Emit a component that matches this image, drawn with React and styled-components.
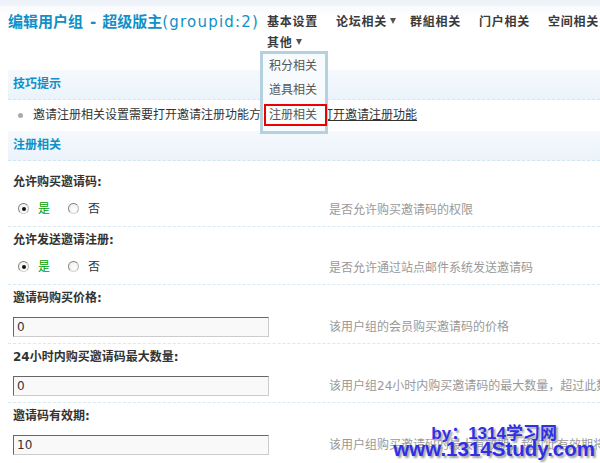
import React from 'react';
import styled, { createGlobalStyle } from 'styled-components';

const GlobalStyle = createGlobalStyle`
  html,
  body {
    margin: 0;
    padding: 0;
    overflow: hidden;
    background: #fff;
  }

  body {
    font: 12px/1.5 'DejaVu Sans', 'Noto Sans CJK SC', sans-serif;
    color: #333;
  }
`;

const Page = styled.div`
  position: relative;
  width: 600px;
  height: 463px;
  overflow: hidden;
  background: linear-gradient(#edf3f9 0, #edf3f9 5px, #f8fafd 6px, #fff 18px);
`;

const Header = styled.div`
  display: flex;
  align-items: flex-start;
  padding: 12px 0 0 8px;
`;

const Title = styled.h1`
  flex-shrink: 0;
  width: 259px;
  margin: 0;
  font-size: 15px;
  line-height: 21px;
  font-weight: bold;
  color: #0f90c8;
  white-space: nowrap;

  .dash {
    margin: 0 6px 0 7px;
  }

  .latin {
    font-weight: normal;
    letter-spacing: 1.2px;
  }
`;

const Nav = styled.ul`
  display: flex;
  flex-wrap: wrap;
  column-gap: 18px;
  flex-shrink: 0;
  width: 360px;
  margin: 0;
  padding: 0;
  list-style: none;
`;

const NavItem = styled.li`
  position: relative;
  font-weight: bold;
  line-height: 21px;
  letter-spacing: 0.75px;
  color: #3a3a3a;
  white-space: nowrap;
`;

const NavBreak = styled.li`
  flex-basis: 100%;
  height: 0;
`;

const Caret = styled.span`
  display: inline-block;
  width: 0;
  height: 0;
  margin: 0 -4px 0 3px;
  border-left: 3.5px solid transparent;
  border-right: 3.5px solid transparent;
  border-top: 6px solid #555;
  vertical-align: 2px;
`;

const Menu = styled.ul`
  position: absolute;
  top: 18px;
  left: -7px;
  z-index: 5;
  width: 62px;
  margin: 0;
  padding: 0 0 5px;
  list-style: none;
  border: 3px solid #b3d2de;
  background: #f8fbfd;
  font-weight: normal;
  letter-spacing: 0;
`;

const MenuItem = styled.li`
  padding-left: ${({ $active }) => ($active ? '3px' : '6px')};
  line-height: ${({ $active }) => ($active ? '18px' : '24px')};
  color: #555;
  ${({ $active }) =>
    $active &&
    `
    margin: 2px -2px 0 1px;
    border: 2px solid #e00;
    background: rgba(248, 251, 253, 0.85);
  `}
`;

const Main = styled.div`
  margin: 16px 0 0 8px;
`;

const SectionTitle = styled.h3`
  height: 29px;
  margin: 0;
  padding-left: 5px;
  font-size: 12px;
  line-height: 29px;
  font-weight: bold;
  color: #0f90c8;
  background: linear-gradient(#f5f9fd, #ebf3fb);
  border-bottom: 1px dashed #cfe5f4;
`;

const Tip = styled.div`
  position: relative;
  height: 31px;
  padding-left: 25px;
  line-height: 31px;
  white-space: nowrap;

  &:before {
    content: '';
    position: absolute;
    left: 10px;
    top: 13px;
    width: 5px;
    height: 5px;
    border-radius: 50%;
    background: #aaa;
  }

  a {
    color: #333;
    text-decoration: underline;
  }
`;

const Block = styled.div`
  &:first-child {
    padding-top: 8px;
  }

  & + & {
    border-top: 1px dashed #d6e9f5;
  }
`;

const Label = styled.div`
  padding-left: 5px;
  line-height: 26px;
  font-weight: bold;
  color: #333;
`;

const ValueRow = styled.div`
  display: grid;
  grid-template-columns: 316px 1fr;
  align-items: center;
  height: ${({ $input }) => ($input ? '20px' : '25px')};
  padding: ${({ $input }) => ($input ? '6px 0' : '1px 0 5px')};
`;

const Field = styled.div`
  display: flex;
  align-items: center;
  padding-left: 5px;
`;

const Desc = styled.div`
  padding: ${({ $input }) => ($input ? '0' : '3px')} 0 0 5px;
  color: #999;
  white-space: nowrap;
`;

const RadioLabel = styled.label`
  display: flex;
  align-items: center;
  margin-right: 13px;
  color: ${({ $on }) => ($on ? '#00a000' : '#333')};
`;

const RadioDot = styled.span`
  position: relative;
  box-sizing: border-box;
  width: 11px;
  height: 11px;
  margin: 0 9px 0 5px;
  border: 1px solid;
  border-color: #7a7a7a #b5b5b5 #d5d5d5 #8a8a8a;
  border-radius: 50%;
  background: radial-gradient(circle at 60% 60%, #fff, #ecebe3);

  ${({ $on }) =>
    $on &&
    `
    &:after {
      content: '';
      position: absolute;
      left: 2.5px;
      top: 2.5px;
      width: 4px;
      height: 4px;
      border-radius: 50%;
      background: #111;
    }
  `}
`;

const TextInput = styled.input`
  box-sizing: border-box;
  width: 256px;
  height: 20px;
  margin: 0;
  padding: 0 3px;
  border: 1px solid;
  border-color: #666 #ccc #ccc #666;
  background: #f9f9f9;
  font: 12px 'DejaVu Sans', sans-serif;
  color: #333;
  outline: none;
`;

const Watermark = styled.div`
  position: absolute;
  right: 5px;
  bottom: 4px;
  z-index: 10;
  font-family: 'Liberation Sans', 'Noto Sans CJK SC', sans-serif;
  font-weight: bold;
  color: #2f2fe8;
  text-align: center;
  text-shadow: 2px 2px 2px #a0a0a0;
  white-space: nowrap;

  .top {
    margin-bottom: -3px;
    font-size: 17px;
    line-height: 16px;
  }

  .bottom {
    font-size: 20.5px;
    line-height: 20px;
  }
`;

const Radios = ({ value }) => (
  <Field>
    <RadioLabel $on={value}>
      <RadioDot $on={value} />是
    </RadioLabel>
    <RadioLabel $on={!value}>
      <RadioDot $on={!value} />否
    </RadioLabel>
  </Field>
);

const settings = [
  { label: '允许购买邀请码:', radio: true, value: true, desc: '是否允许购买邀请码的权限' },
  { label: '允许发送邀请注册:', radio: true, value: true, desc: '是否允许通过站点邮件系统发送邀请码' },
  { label: '邀请码购买价格:', value: '0', desc: '该用户组的会员购买邀请码的价格' },
  {
    label: '24小时内购买邀请码最大数量:',
    value: '0',
    desc: '该用户组24小时内购买邀请码的最大数量，超过此数量将无法购买',
  },
  { label: '邀请码有效期:', value: '10', desc: '该用户组购买邀请码的最大有效期，超过此有效期将自动失效' },
];

const navItems = [
  { name: '基本设置' },
  { name: '论坛相关', caret: true },
  { name: '群組相关' },
  { name: '门户相关' },
  { name: '空间相关' },
];

const menuItems = ['积分相关', '道具相关', '注册相关'];

const App = () => (
  <Page>
    <GlobalStyle />
    <Header>
      <Title>
        编辑用户组<span className="dash">-</span>超级版主<span className="latin">(groupid:2)</span>
      </Title>
      <Nav>
        {navItems.map(item => (
          <NavItem key={item.name}>
            {item.name}
            {item.caret && <Caret />}
          </NavItem>
        ))}
        <NavBreak />
        <NavItem>
          其他
          <Caret />
          <Menu>
            {menuItems.map((m, i) => (
              <MenuItem key={m} $active={i === menuItems.length - 1}>
                {m}
              </MenuItem>
            ))}
          </Menu>
        </NavItem>
      </Nav>
    </Header>

    <Main>
      <SectionTitle>技巧提示</SectionTitle>
      <Tip>
        邀请注册相关设置需要打开邀请注册功能方有效，<a href="#">点此打开邀请注册功能</a>
      </Tip>

      <SectionTitle>注册相关</SectionTitle>
      <div>
        {settings.map(s => (
          <Block key={s.label}>
            <Label>{s.label}</Label>
            <ValueRow $input={!s.radio}>
              {s.radio ? (
                <Radios value={s.value} />
              ) : (
                <Field>
                  <TextInput defaultValue={s.value} />
                </Field>
              )}
              <Desc $input={!s.radio}>{s.desc}</Desc>
            </ValueRow>
          </Block>
        ))}
      </div>
    </Main>

    <Watermark>
      <div className="top">by：1314学习网</div>
      <div className="bottom">www.1314Study.com</div>
    </Watermark>
  </Page>
);

export default App;
